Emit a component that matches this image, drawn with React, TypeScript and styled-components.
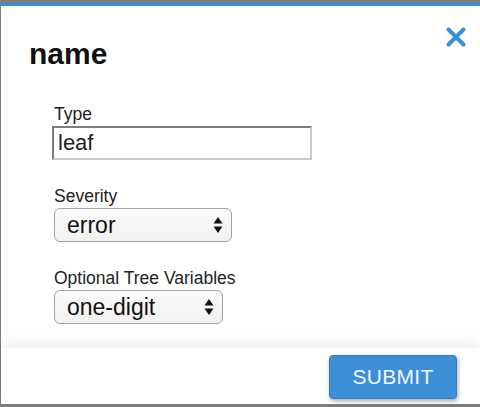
import React from "react";
import styled, { createGlobalStyle } from "styled-components";

const GlobalStyle = createGlobalStyle`
  html, body {
    margin: 0;
    padding: 0;
    height: 100%;
    background: #7d7d7d;
    font-family: "Liberation Sans", Arial, Helvetica, sans-serif;
    overflow: hidden;
  }
`;

export default function App() {
  const [type, setType] = React.useState("leaf");
  const [severity, setSeverity] = React.useState("error");
  const [treeVar, setTreeVar] = React.useState("one-digit");

  return (
    <>
      <GlobalStyle />
      <Modal>
        <ModalHeader>
          <ModalTitle>name</ModalTitle>
          <CloseButton aria-label="close">
            <svg width="20" height="20" viewBox="0 0 20 20">
              <path
                d="M2.5 2.5 L17.5 17.5 M17.5 2.5 L2.5 17.5"
                stroke="#3a8fd6"
                strokeWidth="4"
                strokeLinecap="round"
              />
            </svg>
          </CloseButton>
        </ModalHeader>

        <ModalBody>
          <Field>
            <FieldLabel>Type</FieldLabel>
            <TextInput
              value={type}
              onChange={(e) => setType(e.target.value)}
            />
          </Field>

          <Field>
            <FieldLabel>Severity</FieldLabel>
            <SelectWrap $width={178}>
              <Select
                value={severity}
                onChange={(e) => setSeverity(e.target.value)}
              >
                <option value="error">error</option>
                <option value="warning">warning</option>
                <option value="info">info</option>
              </Select>
              <SelectArrows />
            </SelectWrap>
          </Field>

          <Field>
            <FieldLabel>Optional Tree Variables</FieldLabel>
            <SelectWrap $width={169}>
              <Select
                value={treeVar}
                onChange={(e) => setTreeVar(e.target.value)}
              >
                <option value="one-digit">one-digit</option>
                <option value="two-digit">two-digit</option>
              </Select>
              <SelectArrows />
            </SelectWrap>
          </Field>
        </ModalBody>

        <ModalFooter>
          <SubmitButton>Submit</SubmitButton>
        </ModalFooter>
      </Modal>
    </>
  );
}

function SelectArrows() {
  return (
    <ArrowIcon width="10" height="18" viewBox="0 0 10 18">
      <path d="M5 1 L9.5 7.5 L0.5 7.5 Z" fill="#111" />
      <path d="M5 17 L9.5 10.5 L0.5 10.5 Z" fill="#111" />
    </ArrowIcon>
  );
}

const Modal = styled.div`
  margin: 3px 0 0 1px;
  height: calc(100vh - 6px);
  box-sizing: border-box;
  background: #fff;
  border-top: 3px solid #3590dc;
  display: flex;
  flex-direction: column;
`;

const ModalHeader = styled.div`
  display: flex;
  justify-content: space-between;
  align-items: flex-start;
  padding: 21px 14px 0 28px;
`;

const ModalTitle = styled.h2`
  margin: 10px 0 0;
  font-size: 30px;
  font-weight: bold;
  color: #111;
  line-height: 34px;
`;

const CloseButton = styled.button`
  border: none;
  background: none;
  padding: 0;
  width: 20px;
  height: 20px;
  cursor: pointer;
  display: flex;
`;

const ModalBody = styled.div`
  flex: 1;
  padding: 33px 0 0 51px;
  display: flex;
  flex-direction: column;
  gap: 26px;
`;

const Field = styled.div`
  display: flex;
  flex-direction: column;
  align-items: flex-start;
  gap: 2px;
`;

const FieldLabel = styled.label`
  font-size: 17.5px;
  line-height: 20px;
  color: #222;
  padding-left: 2px;
`;

const TextInput = styled.input`
  width: 260px;
  height: 34px;
  box-sizing: border-box;
  border: 2px solid;
  border-color: #7c7c7c #c9c9c9 #c9c9c9 #7c7c7c;
  padding: 0 0 0 4px;
  font-family: "Liberation Sans", Arial, sans-serif;
  font-size: 22px;
  color: #222;
  outline: none;
`;

const SelectWrap = styled.div<{ $width: number }>`
  position: relative;
  width: ${(p) => p.$width}px;
  margin-left: 2px;
`;

const Select = styled.select`
  appearance: none;
  -webkit-appearance: none;
  width: 100%;
  height: 34px;
  box-sizing: border-box;
  border: 1px solid #a3a3a3;
  border-radius: 6px;
  background: linear-gradient(#fbfbfb, #f1f1f1);
  padding: 0 0 0 12px;
  font-family: "Liberation Sans", Arial, sans-serif;
  font-size: 23px;
  color: #111;
  outline: none;
`;

const ArrowIcon = styled.svg`
  position: absolute;
  right: 9px;
  top: 8px;
  pointer-events: none;
`;

const ModalFooter = styled.div`
  height: 56px;
  box-sizing: border-box;
  display: flex;
  justify-content: flex-end;
  align-items: flex-start;
  padding: 7px 23px 0 0;
  box-shadow: 0 -5px 12px rgba(0, 0, 0, 0.07);
  position: relative;
`;

const SubmitButton = styled.button`
  width: 128px;
  height: 44px;
  background: #3d8fd5;
  border: 1px solid #2f7fc6;
  border-radius: 4px;
  box-shadow: 1px 2px 4px rgba(0, 0, 0, 0.35);
  color: #f2f6fb;
  font-family: "Liberation Sans", Arial, sans-serif;
  font-size: 21px;
  text-transform: uppercase;
  letter-spacing: 0.3px;
  cursor: pointer;
`;
